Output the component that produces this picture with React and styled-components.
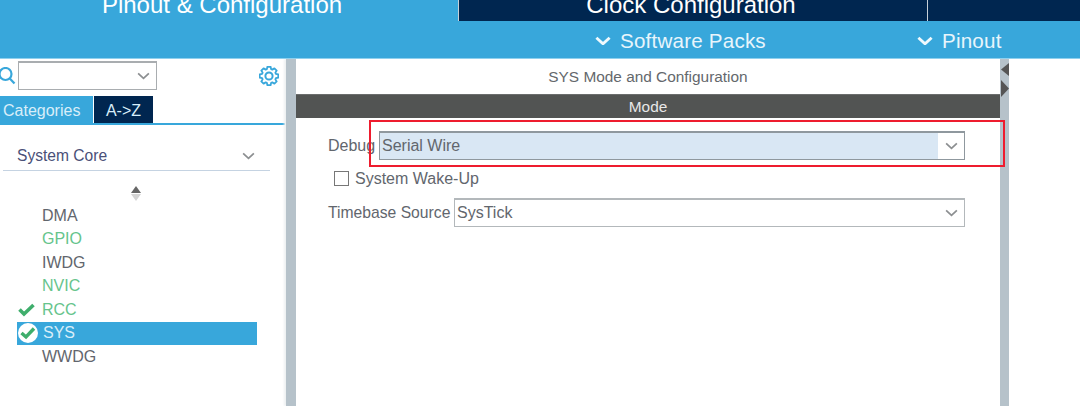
import React from 'react'
import styled, { createGlobalStyle } from 'styled-components'

const GlobalStyle = createGlobalStyle`
  html, body {
    margin: 0;
    padding: 0;
    background: #fff;
  }
  body {
    font-family: "Liberation Sans", Arial, sans-serif;
    color: #5f6368;
  }
`

const Page = styled.div`
  position: relative;
  width: 1080px;
  height: 406px;
  overflow: hidden;
  background: #fff;
`

const TabBar = styled.div`
  display: flex;
  height: 21px;
  background: #002650;
`

const TopTab = styled.div`
  width: ${p => p.$width}px;
  height: 21px;
  flex: none;
  box-sizing: border-box;
  display: flex;
  align-items: flex-end;
  justify-content: center;
  overflow: hidden;
  padding-right: ${p => p.$shift || 0}px;
  background: ${p => (p.$active ? '#38a7db' : '#002650')};
  border-right: ${p => (p.$line ? '1px solid #c6d0d8' : 'none')};
  color: #fff;
  font-size: 24px;
  line-height: 28px;
  white-space: nowrap;
`

const TopTabText = styled.span`
  display: block;
  flex: none;
  padding-bottom: 2px;
`

const SubBar = styled.div`
  position: relative;
  height: 37px;
  background: #38a7db;
  border-bottom: 1px solid #8fd0ee;
  color: #e8f5fb;
  font-size: 20.6px;
`

const SubItem = styled.div`
  position: absolute;
  top: 1px;
  left: ${p => p.$left}px;
  height: 37px;
  display: flex;
  align-items: center;
  gap: 9px;
  letter-spacing: 0.2px;
`

const Body = styled.div`
  display: flex;
  height: 347px;
`

const LeftPanel = styled.div`
  width: 286px;
  flex: none;
  display: flex;
  flex-direction: column;
`

const SearchRow = styled.div`
  display: flex;
  align-items: center;
  height: 37px;
  padding-bottom: 4px;
  box-sizing: border-box;
`

const SearchBox = styled.div`
  width: 139px;
  height: 29px;
  margin-left: 2px;
  box-sizing: border-box;
  display: flex;
  align-items: center;
  justify-content: flex-end;
  padding-right: 6px;
  border: 1px solid #a9adb0;
  border-top: 2px solid #a9adb0;
  background: #fff;
`

const GearWrap = styled.div`
  margin-left: 102px;
  display: flex;
`

const ListTabs = styled.div`
  display: flex;
  height: 27px;
  border-bottom: 2px solid #38a7db;
  margin-right: 1px;
`

const ListTab = styled.div`
  width: ${p => p.$width}px;
  height: 27px;
  margin-right: 1px;
  box-sizing: border-box;
  padding-top: 2px;
  padding-left: ${p => p.$pad || 0}px;
  display: flex;
  align-items: center;
  justify-content: ${p => (p.$pad ? 'flex-start' : 'center')};
  background: ${p => (p.$dark ? '#002650' : '#38a7db')};
  color: #d8eef9;
  font-size: 16px;
  white-space: nowrap;
`

const CategoryRow = styled.div`
  display: flex;
  align-items: center;
  justify-content: space-between;
  width: 267px;
  height: 46px;
  margin-left: 3px;
  padding: 17px 15px 0 14px;
  box-sizing: border-box;
  border-bottom: 1.5px solid #c5d3e2;
  color: #4a5078;
  font-size: 15.6px;
`

const ScrollArrows = styled.div`
  display: flex;
  justify-content: center;
  width: 272px;
  margin-top: 15px;
  height: 16px;
`

const PeripheralList = styled.div`
  display: flex;
  flex-direction: column;
  margin: 2px 0 0 17px;
  width: 240px;
`

const Peripheral = styled.div`
  position: relative;
  height: 23.5px;
  display: flex;
  align-items: center;
  padding-left: ${p => (p.$selected ? 26 : 25)}px;
  font-size: 16px;
  color: ${p => (p.$selected ? '#d8eef9' : p.$ok ? '#66c48c' : '#62666d')};
  background: ${p => (p.$selected ? '#38a7db' : 'transparent')};
`

const CheckMark = styled.span`
  position: absolute;
  left: 1px;
  top: 50%;
  transform: translateY(-50%);
  display: flex;
`

const Scrollbar = styled.div`
  width: 10px;
  flex: none;
  background: #b6c2ca;
  box-shadow: -2px 0 2px #edf0f2;
`

const MainPanel = styled.div`
  width: 704px;
  flex: none;
  display: flex;
  flex-direction: column;
`

const PanelTitle = styled.div`
  height: 35px;
  display: flex;
  align-items: center;
  justify-content: center;
  font-size: 15.4px;
  color: #64686c;
`

const ModeBar = styled.div`
  height: 24px;
  display: flex;
  align-items: center;
  justify-content: center;
  background: #525453;
  border-top: 1px solid #6b6d6d;
  box-sizing: border-box;
  color: #e8e8e8;
  font-size: 15.4px;
`

const Form = styled.div`
  display: flex;
  flex-direction: column;
  padding: 13px 0 0 32px;
`

const FieldRow = styled.div`
  display: flex;
  align-items: center;
`

const FieldLabel = styled.label`
  font-size: ${p => p.$size || 16}px;
  color: #62666d;
  white-space: nowrap;
  width: ${p => p.$width}px;
  flex: none;
`

const SelectBox = styled.div`
  width: ${p => p.$width}px;
  height: 29px;
  flex: none;
  box-sizing: border-box;
  display: flex;
  border: 1px solid ${p => (p.$strong ? '#8f989e' : '#b3b8bb')};
  border-top-width: 2px;
  background: #fff;
  font-size: 16px;
  color: #62666d;
`

const SelectValue = styled.div`
  flex: 1;
  display: flex;
  align-items: center;
  padding-left: 2px;
  background: ${p => (p.$highlight ? '#d9e7f4' : '#fff')};
`

const SelectArrow = styled.div`
  width: 26px;
  flex: none;
  display: flex;
  align-items: center;
  justify-content: center;
`

const CheckRow = styled.div`
  display: flex;
  align-items: center;
  gap: 6px;
  height: 27px;
  margin: 5px 0 0 6px;
  font-size: 16px;
  color: #62666d;
`

const CheckBox = styled.span`
  width: 15px;
  height: 15px;
  box-sizing: border-box;
  border: 1.5px solid #777;
  background: #fff;
`

const TimebaseRow = styled(FieldRow)`
  margin-top: 6px;
`

const Splitter = styled.div`
  position: relative;
  width: 9px;
  flex: none;
  background: #b6c2ca;
`

const SplitArrow = styled.svg`
  position: absolute;
  left: 1px;
  top: ${p => p.$top}px;
`

const RedFrame = styled.div`
  position: absolute;
  left: 369px;
  top: 120px;
  width: 636px;
  height: 47px;
  box-sizing: border-box;
  border: 2px solid #ee1c2e;
  pointer-events: none;
`

const Chevron = ({ size = 13, color = '#8c8f91', width = 1.8 }) => (
  <svg width={size} height={size * 0.6} viewBox="0 0 13 8" fill="none">
    <path d="M1 1.5 L6.5 6.5 L12 1.5" stroke={color} strokeWidth={width} />
  </svg>
)

const SearchIcon = () => (
  <svg width="16" height="18" viewBox="0 0 16 18" fill="none" stroke="#38a7db" strokeWidth="2.2">
    <circle cx="5.5" cy="7" r="6" />
    <path d="M9.8 11.5 L14.5 16.5" />
  </svg>
)

// eight teeth around a ring, outline only
const gearPath = (() => {
  const points = []
  for (let i = 0; i < 8; i++) {
    const a = (i * Math.PI) / 4
    ;[[-0.3, 7.2], [-0.17, 9.4], [0.17, 9.4], [0.3, 7.2]].forEach(([da, r]) => {
      points.push(`${(10 + r * Math.cos(a + da)).toFixed(2)} ${(10 + r * Math.sin(a + da)).toFixed(2)}`)
    })
  }
  return `M${points.join(' L')} Z`
})()

const GearIcon = () => (
  <svg width="20" height="20" viewBox="0 0 20 20" fill="none" stroke="#38a7db">
    <circle cx="10" cy="10" r="3.6" strokeWidth="2" />
    <path d={gearPath} strokeWidth="1.8" strokeLinejoin="round" />
  </svg>
)

const Tick = () => (
  <svg width="17" height="14" viewBox="0 0 17 14" fill="none">
    <path d="M1.5 6.5 L6 11 L15.5 2" stroke="#3fae6c" strokeWidth="3.6" />
  </svg>
)

const CircleTick = () => (
  <svg width="20" height="20" viewBox="0 0 20 20" fill="none">
    <circle cx="10" cy="10" r="10" fill="#fff" />
    <path d="M3.5 10 L8 14 L16 5.5" stroke="#3fae6c" strokeWidth="3.4" />
  </svg>
)

const UpDownArrows = () => (
  <svg width="10" height="15" viewBox="0 0 10 15">
    <path d="M5 0 L10 7 H0 Z" fill="#666" />
    <path d="M0 8 H10 L5 15 Z" fill="#d4d4d4" />
  </svg>
)

const peripherals = [
  { name: 'DMA' },
  { name: 'GPIO', ok: true },
  { name: 'IWDG' },
  { name: 'NVIC', ok: true },
  { name: 'RCC', ok: true, tick: true },
  { name: 'SYS', selected: true },
  { name: 'WWDG' }
]

export default function App() {
  return (
    <Page>
      <GlobalStyle />
      <TabBar>
        <TopTab $width={459} $active $line $shift={14}>
          <TopTabText>Pinout &amp; Configuration</TopTabText>
        </TopTab>
        <TopTab $width={469} $line $shift={4}>
          <TopTabText>Clock Configuration</TopTabText>
        </TopTab>
        <TopTab $width={152} />
      </TabBar>
      <SubBar>
        <SubItem $left={595}>
          <Chevron size={16} color="#f0f9fd" width={2.4} />
          Software Packs
        </SubItem>
        <SubItem $left={917}>
          <Chevron size={16} color="#f0f9fd" width={2.4} />
          Pinout
        </SubItem>
      </SubBar>
      <Body>
        <LeftPanel>
          <SearchRow>
            <SearchIcon />
            <SearchBox>
              <Chevron />
            </SearchBox>
            <GearWrap>
              <GearIcon />
            </GearWrap>
          </SearchRow>
          <ListTabs>
            <ListTab $width={93} $pad={3}>Categories</ListTab>
            <ListTab $width={59} $dark>A-&gt;Z</ListTab>
          </ListTabs>
          <CategoryRow>
            System Core
            <Chevron />
          </CategoryRow>
          <ScrollArrows>
            <UpDownArrows />
          </ScrollArrows>
          <PeripheralList>
            {peripherals.map(item => (
              <Peripheral key={item.name} $ok={item.ok} $selected={item.selected}>
                {item.tick && (
                  <CheckMark>
                    <Tick />
                  </CheckMark>
                )}
                {item.selected && (
                  <CheckMark>
                    <CircleTick />
                  </CheckMark>
                )}
                {item.name}
              </Peripheral>
            ))}
          </PeripheralList>
        </LeftPanel>
        <Scrollbar />
        <MainPanel>
          <PanelTitle>SYS Mode and Configuration</PanelTitle>
          <ModeBar>Mode</ModeBar>
          <Form>
            <FieldRow>
              <FieldLabel $width={51}>Debug</FieldLabel>
              <SelectBox $width={586} $strong>
                <SelectValue $highlight>Serial Wire</SelectValue>
                <SelectArrow>
                  <Chevron />
                </SelectArrow>
              </SelectBox>
            </FieldRow>
            <CheckRow>
              <CheckBox />
              System Wake-Up
            </CheckRow>
            <TimebaseRow>
              <FieldLabel $width={126} $size={15.7}>Timebase Source</FieldLabel>
              <SelectBox $width={511}>
                <SelectValue>SysTick</SelectValue>
                <SelectArrow>
                  <Chevron />
                </SelectArrow>
              </SelectBox>
            </TimebaseRow>
          </Form>
        </MainPanel>
        <Splitter>
          <SplitArrow $top={4} width="8" height="13" viewBox="0 0 8 13">
            <path d="M8 0 V13 L0 6.5 Z" fill="#555" />
          </SplitArrow>
          <SplitArrow $top={21} width="8" height="17" viewBox="0 0 8 17">
            <path d="M0 0 L8 8.5 L0 17 Z" fill="#555" />
          </SplitArrow>
        </Splitter>
      </Body>
      <RedFrame />
    </Page>
  )
}
